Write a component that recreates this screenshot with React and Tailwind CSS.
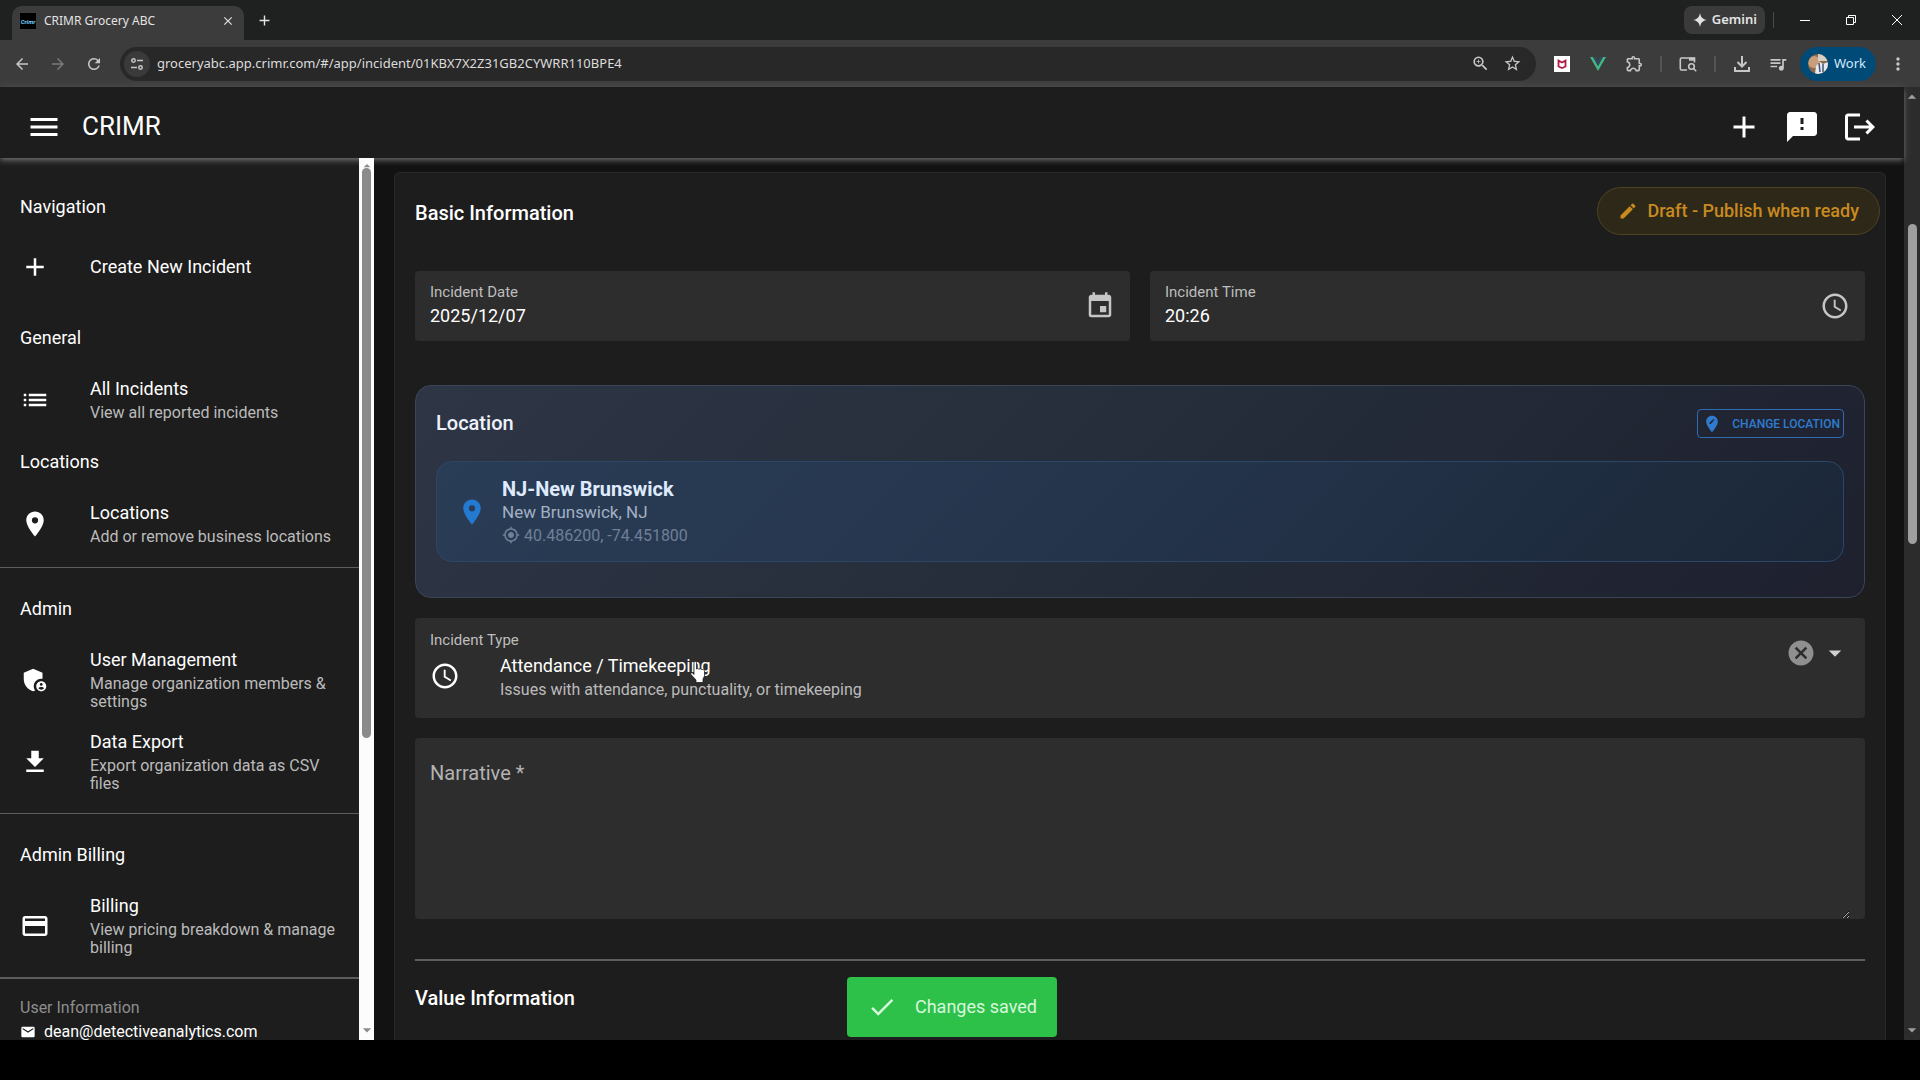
import React from "react";
import {
  MdAccessTime,
  MdAdd,
  MdAdminPanelSettings,
  MdArrowBack,
  MdArrowDropDown,
  MdArrowDropUp,
  MdArrowForward,
  MdCancel,
  MdCheck,
  MdClose,
  MdCreditCard,
  MdEdit,
  MdEditLocation,
  MdEmail,
  MdEvent,
  MdFeedback,
  MdFileDownload,
  MdList,
  MdLogout,
  MdMenu,
  MdMoreVert,
  MdMyLocation,
  MdOutlineExtension,
  MdPlace,
  MdQueueMusic,
  MdRefresh,
  MdStarOutline,
  MdZoomIn,
} from "react-icons/md";

function TabStrip() {
  return (
    <div className="flex h-10 shrink-0 items-center bg-[#1f2120] pl-3 text-[#e3e3e3]">
      <div className="flex h-[34px] w-58 items-center self-end rounded-t-[10px] bg-[#3c3c3c] px-2 pb-1">
        <span className="flex size-4 items-center justify-center bg-black font-['Roboto'] text-[6px] font-bold italic text-sky-300">
          Crimr
        </span>
        <span className="ml-2 flex-1 truncate text-xs">CRIMR Grocery ABC</span>
        <button aria-label="Close tab" className="flex size-4 items-center justify-center">
          <MdClose size={14} />
        </button>
      </div>
      <button aria-label="New tab" className="flex h-10 w-10 items-center justify-center">
        <MdAdd size={17} />
      </button>
      <div className="ml-auto flex items-center">
        <button className="flex h-7 items-center gap-1 rounded-lg bg-[#3a3a3a] px-2 text-[13px] font-semibold">
          <svg viewBox="0 0 16 16" className="size-4" fill="currentColor">
            <path d="M8 1C8.800 5.400 10.600 7.200 15 8 10.600 8.800 8.800 10.600 8 15 7.200 10.600 5.400 8.800 1 8 5.400 7.200 7.200 5.400 8 1Z" />
          </svg>
          Gemini
        </button>
        <span className="mx-2 h-4 w-px bg-[#4a4a4a]" />
        <button aria-label="Minimize" className="flex h-10 w-[46px] items-center justify-center">
          <span className="h-px w-2.5 bg-white" />
        </button>
        <button aria-label="Restore" className="flex h-10 w-[46px] items-center justify-center">
          <svg viewBox="0 0 10 10" className="size-2.5" fill="none" stroke="#fff">
            <path d="M.5 2.500h7v7h-7zM2.500 2.500v-2h7v7h-2" />
          </svg>
        </button>
        <button aria-label="Close window" className="flex h-10 w-[46px] items-center justify-center">
          <svg viewBox="0 0 10 10" className="size-2.5" fill="none" stroke="#fff">
            <path d="M0 0l10 10M10 0L0 10" />
          </svg>
        </button>
      </div>
    </div>
  );
}

function ToolCell({ label, children }) {
  return (
    <button aria-label={label} className="flex h-9 w-9 items-center justify-center">
      {children}
    </button>
  );
}

function Toolbar() {
  return (
    <div className="flex h-[47px] shrink-0 items-center bg-[#3c3c3c] text-[#c7c7c7]">
      <div className="flex pl-1">
        <ToolCell label="Back"><MdArrowBack size={18} /></ToolCell>
        <button aria-label="Forward" className="flex h-9 w-9 items-center justify-center text-[#7a7a7a]">
          <MdArrowForward size={18} />
        </button>
        <ToolCell label="Reload"><MdRefresh size={18} /></ToolCell>
      </div>
      <div className="ml-2 flex h-[34px] flex-1 items-center rounded-full bg-[#282828] pl-1">
        <button aria-label="View site information" className="flex size-[26px] items-center justify-center rounded-full bg-[#3a3a3a]">
          <svg viewBox="0 0 16 16" className="size-4" fill="none" stroke="currentColor" strokeWidth="1.500">
            <circle cx="4.500" cy="4.500" r="1.700" />
            <path d="M8 4.500h6M2 11.500h6" />
            <circle cx="11.500" cy="11.500" r="1.700" />
          </svg>
        </button>
        <input
          aria-label="Address"
          className="ml-[7px] min-w-0 flex-1 bg-transparent text-[13px] text-[#dcdcdc] outline-none"
          defaultValue="groceryabc.app.crimr.com/#/app/incident/01KBX7X2Z31GB2CYWRR110BPE4"
        />
        <button aria-label="Zoom" className="flex w-8 justify-center"><MdZoomIn size={19} /></button>
        <button aria-label="Bookmark" className="mr-2 flex w-8 justify-center"><MdStarOutline size={19} /></button>
      </div>
      <div className="ml-2 flex items-center">
        <ToolCell label="Security extension">
          <svg viewBox="0 0 16 16" className="size-4">
            <path d="M0 0h16v16H0z" fill="#fff" />
            <path d="M4.500 4.500v6L8 12l3.500-1.500v-6L8 6.500z" fill="none" stroke="#b01c48" strokeWidth="1.800" />
          </svg>
        </ToolCell>
        <ToolCell label="Vue extension">
          <svg viewBox="0 0 16 14" className="h-3.5 w-4">
            <path d="M0 0h3l5 9 5-9h3L8 14z" fill="#41b883" />
            <path d="M3 0h3l2 4 2-4h3L8 9z" fill="#35495e" />
          </svg>
        </ToolCell>
        <ToolCell label="Extensions"><MdOutlineExtension size={19} /></ToolCell>
        <span className="mx-2 h-4 w-0.5 bg-[#555]" />
        <ToolCell label="Search this page">
          <svg viewBox="0 0 18 16" className="h-4 w-[18px]" fill="none" stroke="currentColor" strokeWidth="1.600">
            <path d="M8 14H2.500a1.200 1.200 0 0 1-1.200-1.200V3.200A1.200 1.200 0 0 1 2.500 2h13v4.500" />
            <path d="M10 3.200h5.500" strokeWidth="3" />
            <circle cx="12.500" cy="10.500" r="2.800" />
            <path d="M14.500 12.500l2.700 2.700" />
          </svg>
        </ToolCell>
        <span className="mx-2 h-4 w-0.5 bg-[#555]" />
        <ToolCell label="Downloads">
          <svg viewBox="0 0 18 18" className="size-[18px]" fill="none" stroke="currentColor" strokeWidth="2">
            <path d="M9 1v10M4.500 7L9 11.500 13.500 7M2 12v4h14v-4" />
          </svg>
        </ToolCell>
        <ToolCell label="Media controls"><MdQueueMusic size={20} /></ToolCell>
        <button className="ml-1 flex h-[34px] w-19 items-center gap-1.5 rounded-full bg-[#004a77] pl-2 text-[13px] text-[#d3e9fb]">
          <svg viewBox="0 0 20 20" className="size-5">
            <clipPath id="avatar"><circle cx="10" cy="10" r="10" /></clipPath>
            <g clipPath="url(#avatar)">
              <path d="M0 0h20v20H0z" fill="#8a6a4c" />
              <circle cx="6" cy="8" r="6" fill="#c99f7b" />
              <path d="M10 0h10v7H10z" fill="#d9cfc2" />
              <path d="M7 20l1-8 4-4 3 2 5-2v12z" fill="#e6eaf2" />
              <path d="M11 9l1 9M15 10v8" stroke="#40506c" strokeWidth="1.500" />
            </g>
          </svg>
          Work
        </button>
        <button aria-label="Browser menu" className="flex w-11 justify-center"><MdMoreVert size={20} /></button>
      </div>
    </div>
  );
}

function AppHeader() {
  return (
    <header className="relative z-10 flex h-[71px] shrink-0 items-center bg-[#1d1d1d] px-[26px] pt-2 text-white shadow-[0_2px_4px_-1px_rgba(255,255,255,0.2),0_4px_5px_rgba(255,255,255,0.14),0_1px_10px_rgba(255,255,255,0.12)]">
      <button aria-label="Menu"><MdMenu size={36} /></button>
      <h1 className="ml-5 flex-1 text-[26px]">CRIMR</h1>
      <div className="flex gap-[22px]">
        <button aria-label="Create incident"><MdAdd size={36} /></button>
        <button aria-label="Send feedback"><MdFeedback size={36} /></button>
        <button aria-label="Log out"><MdLogout size={36} /></button>
      </div>
    </header>
  );
}

function NavHeading({ children }) {
  return <h2 className="flex h-[60px] items-center px-5 text-lg">{children}</h2>;
}

function NavItem({ icon: Icon, title, caption }) {
  return (
    <a href="#" className="flex min-h-[60px] items-center py-[10px] pl-5 pr-3">
      <Icon size={30} className="shrink-0" />
      <span className="ml-10 flex flex-col gap-1">
        <span className="text-lg leading-[22px]">{title}</span>
        {caption && <span className="text-base leading-[18px] text-[#bbbbbb]">{caption}</span>}
      </span>
    </a>
  );
}

function Sidebar() {
  return (
    <aside className="flex w-[374px] shrink-0 bg-[#1d1d1d] text-white">
      <nav className="min-w-0 flex-1 overflow-hidden">
        <div className="pb-[11px] pt-[19px]">
          <NavHeading>Navigation</NavHeading>
          <NavItem icon={MdAdd} title="Create New Incident" />
        </div>
        <div className="border-b border-[#5c5c5c] pb-[11px]">
          <NavHeading>General</NavHeading>
          <NavItem icon={MdList} title="All Incidents" caption="View all reported incidents" />
          <NavHeading>Locations</NavHeading>
          <NavItem icon={MdPlace} title="Locations" caption="Add or remove business locations" />
        </div>
        <div className="border-b border-[#5c5c5c] pb-[10px] pt-[11px]">
          <NavHeading>Admin</NavHeading>
          <NavItem icon={MdAdminPanelSettings} title="User Management" caption="Manage organization members & settings" />
          <NavItem icon={MdFileDownload} title="Data Export" caption="Export organization data as CSV files" />
        </div>
        <div className="border-b-2 border-[#5c5c5c] pb-[10px] pt-[11px]">
          <NavHeading>Admin Billing</NavHeading>
          <NavItem icon={MdCreditCard} title="Billing" caption="View pricing breakdown & manage billing" />
        </div>
        <div className="px-5 pt-[17px] text-base leading-6">
          <p className="text-[#8e8e8e]">User Information</p>
          <p className="flex items-center gap-2">
            <MdEmail size={16} />
            dean@detectiveanalytics.com
          </p>
        </div>
      </nav>
      <div className="flex w-[15px] flex-col items-center bg-[#fcfcfc] text-[#8b8b8b]">
        <div className="h-[10px] overflow-hidden"><MdArrowDropUp size={16} /></div>
        <div className="h-[570px] w-[9px] rounded-full bg-[#8b8b8b]" />
        <MdArrowDropDown size={20} className="mt-auto" />
      </div>
    </aside>
  );
}

function PickerField({ id, label, value, icon: Icon, action }) {
  return (
    <div className="flex h-[70px] flex-1 items-center rounded bg-[#2d2d2d] px-[15px]">
      <div className="flex min-w-0 flex-1 flex-col pb-1">
        <label htmlFor={id} className="text-[15px] leading-6 text-[#bdbdbd]">{label}</label>
        <input id={id} defaultValue={value} className="h-6 bg-transparent text-lg leading-6 text-white outline-none" />
      </div>
      <button aria-label={action} className="text-[#c6c6c6]"><Icon size={30} /></button>
    </div>
  );
}

function LocationCard() {
  return (
    <section className="mt-11 rounded-2xl border border-[#3a4558] bg-linear-[135deg] from-[#2e3646] via-[#252d3a] to-[#1e202e] px-5 pb-[35px] pt-[23px]">
      <div className="flex items-center justify-between">
        <h3 className="text-xl font-medium leading-[29px] text-[#eef2fb]">Location</h3>
        <button className="flex h-[29px] items-center gap-2.5 rounded border border-[#2f6cb3] pl-1 pr-[3px] text-xs font-medium text-[#2f7ccf]">
          <MdEditLocation size={20} />
          CHANGE LOCATION
        </button>
      </div>
      <div className="mt-[23px] flex h-[101px] items-center rounded-2xl border border-[#2c4668] bg-linear-[135deg] from-[#2a3d56] via-[#24344b] to-[#1b2737] pl-5">
        <MdPlace size={30} className="shrink-0 text-[#2479d0]" />
        <div className="ml-[15px] flex flex-col">
          <p className="text-xl font-bold leading-6 text-[#dfeafd]">NJ-New Brunswick</p>
          <p className="text-[17px] leading-[23px] text-[#a3b0c4]">New Brunswick, NJ</p>
          <p className="flex items-center gap-1 text-base leading-[23px] text-[#6f7f97]">
            <MdMyLocation size={18} />
            40.486200, -74.451800
          </p>
        </div>
      </div>
    </section>
  );
}

function IncidentTypeField() {
  return (
    <div className="mt-5 flex h-[100px] rounded bg-[#2d2d2d] px-[15px] text-white">
      <div className="flex-1 pt-[10px]">
        <label htmlFor="incident-type" className="block text-[15px] leading-6 text-[#bdbdbd]">Incident Type</label>
        <div className="flex items-center gap-10">
          <MdAccessTime size={30} />
          <div className="flex flex-col gap-1 pt-[3px]">
            <select id="incident-type" className="appearance-none bg-transparent text-lg leading-[22px] outline-none">
              <option>Attendance / Timekeeping</option>
            </select>
            <p className="text-base leading-[18px] text-[#bbbbbb]">Issues with attendance, punctuality, or timekeeping</p>
          </div>
        </div>
      </div>
      <div className="flex h-[70px] items-center gap-1">
        <button aria-label="Clear incident type" className="text-[#8f8f8f]"><MdCancel size={30} /></button>
        <MdArrowDropDown size={30} className="text-[#d0d0d0]" />
      </div>
    </div>
  );
}

function PointerHand() {
  return (
    <svg viewBox="0 0 16 22" className="pointer-events-none absolute left-[295px] top-[488px] h-[22px] w-4">
      <path
        d="M4 1.500C4 .3 6.500.3 6.500 1.500V8l1.200-.5 1.300.7 1.300-.4 1.200.8 1.500-.2 1.500 1.200V15l-1.500 3v3.500h-7V19L1 13.500c-.8-1.500.8-2.300 1.800-1.400L4 13.500z"
        fill="#fff"
        stroke="#111"
        strokeWidth=".7"
      />
    </svg>
  );
}

function IncidentForm() {
  return (
    <main className="flex min-w-0 flex-1 bg-[#121212] pl-5 pr-[18px] pt-[14px]">
      <div className="relative flex-1 rounded-t-md border border-b-0 border-[#292929] bg-[#1d1d1d] px-5 pt-[25px] text-white">
        <h2 className="text-xl font-medium leading-[30px]">Basic Information</h2>
        <button className="absolute right-[5px] top-[14px] flex h-12 items-center gap-2.5 rounded-full border border-[#4d4320] bg-[#2e2819] px-5 text-lg font-medium text-[#c98a20]">
          <MdEdit size={20} />
          Draft - Publish when ready
        </button>
        <div className="mt-[43px] flex gap-5">
          <PickerField id="incident-date" label="Incident Date" value="2025/12/07" icon={MdEvent} action="Pick a date" />
          <PickerField id="incident-time" label="Incident Time" value="20:26" icon={MdAccessTime} action="Pick a time" />
        </div>
        <LocationCard />
        <IncidentTypeField />
        <div className="mt-5 flex h-[181px] flex-col rounded bg-[#2d2d2d] px-[15px] pt-[20px]">
          <label htmlFor="narrative" className="text-xl leading-[30px] text-[#b3b3b3]">Narrative *</label>
          <textarea id="narrative" className="w-full flex-1 resize-y bg-transparent outline-none [color-scheme:dark]" />
        </div>
        <hr className="mt-10 border-t-2 border-[#5f5f5f]" />
        <h2 className="mt-[22px] text-xl font-medium leading-[30px]">Value Information</h2>
        <PointerHand />
      </div>
    </main>
  );
}

function PageScrollbar() {
  return (
    <div className="flex w-4 flex-col items-center bg-[#2c2c2c] text-[#9f9f9f]">
      <MdArrowDropUp size={20} />
      <div className="mt-[117px] h-80 w-[9px] rounded-full bg-[#9f9f9f]" />
      <MdArrowDropDown size={20} className="mt-auto" />
    </div>
  );
}

export default function App() {
  return (
    <div className="flex h-screen flex-col overflow-hidden bg-black pb-10 font-['Noto_Sans',sans-serif]">
      <TabStrip />
      <Toolbar />
      <div className="flex min-h-0 flex-1 font-['Roboto',sans-serif]">
        <div className="relative flex min-w-0 flex-1 flex-col">
          <AppHeader />
          <div className="flex min-h-0 flex-1 overflow-hidden">
            <Sidebar />
            <IncidentForm />
          </div>
          <div
            role="status"
            className="absolute bottom-[3px] left-1/2 z-20 flex h-[60px] -translate-x-1/2 items-center gap-[18px] rounded bg-[#2dc149] px-5 text-lg text-[#d8f8dd]"
          >
            <MdCheck size={30} />
            Changes saved
          </div>
        </div>
        <PageScrollbar />
      </div>
    </div>
  );
}
